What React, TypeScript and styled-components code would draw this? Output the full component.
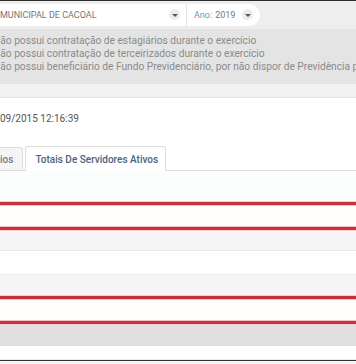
import React from 'react';
import styled, { createGlobalStyle, css } from 'styled-components';

const GlobalStyle = createGlobalStyle`
  html, body {
    margin: 0;
    padding: 0;
    background: #fff;
    overflow: hidden;
  }

  body {
    font-family: Roboto, "Liberation Sans", Arial, sans-serif;
  }
`;

const Page = styled.div`
  width: 356px;
  height: 364px;
  overflow: hidden;
  display: flex;
  flex-direction: column;
`;

const TopStrip = styled.div`
  height: 1px;
  background: #2b2b2b;
`;

const Toolbar = styled.div`
  height: 28px;
  box-sizing: border-box;
  padding: 3px 0 3px 0;
  background: #eeeeee;
  display: flex;
  align-items: center;
`;

const Pill = styled.div`
  height: 22px;
  width: 260px;
  background: #fff;
  border-radius: 0 11px 11px 0;
  display: flex;
  align-items: center;
`;

const Select = styled.div<{ $grow?: boolean }>`
  height: 100%;
  display: flex;
  align-items: center;
  font-size: 9px;
  color: #777;
  white-space: nowrap;
  ${(p) =>
    p.$grow
      ? css`
          width: 187px;
          padding-right: 6px;
          border-right: 1px solid #e3e3e3;
        `
      : css`
          flex: 1;
          padding: 0 7px 0 7px;
        `}
  box-sizing: border-box;
`;

const SelectText = styled.span`
  flex: 1;
  text-transform: uppercase;
`;

const Label = styled.span`
  color: #6d96bd;
  margin-right: 3px;
`;

const Caret = styled.span`
  width: 11px;
  height: 11px;
  border-radius: 50%;
  background: #ececec;
  display: flex;
  align-items: center;
  justify-content: center;
  margin-left: auto;

  &::after {
    content: '';
    border-left: 3px solid transparent;
    border-right: 3px solid transparent;
    border-top: 3px solid #555;
    margin-top: 1px;
  }
`;

const Notices = styled.div`
  height: 56px;
  box-sizing: border-box;
  padding-top: 5px;
  background: #e4e4e4;
  overflow: hidden;
`;

const NoticeLine = styled.div`
  margin-left: -7px;
  font-size: 10.2px;
  line-height: 13px;
  color: #8b8b8b;
  white-space: nowrap;
`;

const SubBar = styled.div`
  height: 13px;
  background: #f2f2f2;
  border-bottom: 1px solid #e6e6e6;
`;

const DateLine = styled.div`
  margin-top: 14px;
  font-size: 10px;
  line-height: 14px;
  color: #555;
  white-space: nowrap;
`;

const TabBar = styled.div`
  margin-top: 20px;
  height: 25px;
  box-sizing: border-box;
  display: flex;
  align-items: flex-end;
  border-bottom: 1px solid #dddddd;
`;

const Tab = styled.div<{ $active?: boolean }>`
  box-sizing: border-box;
  display: flex;
  align-items: center;
  font-size: 10px;
  font-weight: 500;
  white-space: nowrap;
  border: 1px solid #dddddd;
  border-bottom: none;
  border-radius: 3px 3px 0 0;
  ${(p) =>
    p.$active
      ? css`
          height: 25px;
          margin: 0 0 -1px 2px;
          padding: 0 7px 0 9px;
          background: #fff;
          color: #4a6480;
        `
      : css`
          height: 23px;
          padding: 0 9px 0 0;
          border-left: none;
          border-radius: 0 3px 0 0;
          background: #f5f5f5;
          color: #7a7a7a;
        `}
`;

const Table = styled.div`
  display: flex;
  flex-direction: column;
`;

type Tone = 'white' | 'stripe' | 'hover' | 'marked';

const Row = styled.div<{ $tone: Tone; $h: number }>`
  height: ${(p) => p.$h}px;
  box-sizing: border-box;
  flex-shrink: 0;
  ${(p) => {
    switch (p.$tone) {
      case 'marked':
        return css`
          background: #fffefc;
          border-top: 3px solid #c8303b;
          border-bottom: 3px solid #c8303b;
          box-shadow: inset 0 1px 0 #f3c0c4, inset 0 -1px 0 #f3c0c4,
            0 -1px 0 #f6cfd2, 0 1px 0 #f6cfd2;
          position: relative;
          z-index: 1;
        `;
      case 'stripe':
        return css`
          background: #f5f5f5;
          border-bottom: 1px solid #e8e8e8;
        `;
      case 'hover':
        return css`
          background: #e1dfdf;
        `;
      default:
        return css`
          background: #fff;
          border-bottom: 1px solid #ececec;
        `;
    }
  }}
`;

const TableHead = styled.div`
  height: 31px;
  flex-shrink: 0;
  background: #fcfdfd;
`;

const Footer = styled.div`
  flex-shrink: 0;
  height: 3px;
  border-top: 1px solid #333;
  background: #f4f4f4;
`;

const notices = [
  'Não possui contratação de estagiários durante o exercício',
  'Não possui contratação de terceirizados durante o exercício',
  'Não possui beneficiário de Fundo Previdenciário, por não dispor de Previdência própria',
];

const rows: { tone: Tone; h: number }[] = [
  { tone: 'marked', h: 28 },
  { tone: 'stripe', h: 21 },
  { tone: 'white', h: 24 },
  { tone: 'stripe', h: 21 },
  { tone: 'marked', h: 28 },
  { tone: 'hover', h: 22 },
  { tone: 'white', h: 14 },
];

export default function App() {
  return (
    <Page>
      <GlobalStyle />
      <TopStrip />
      <Toolbar>
        <Pill>
          <Select $grow>
            <SelectText>Municipal de Cacoal</SelectText>
            <Caret />
          </Select>
          <Select>
            <Label>Ano:</Label>
            2019
            <Caret />
          </Select>
        </Pill>
      </Toolbar>
      <Notices>
        {notices.map((n) => (
          <NoticeLine key={n}>{n}</NoticeLine>
        ))}
      </Notices>
      <SubBar />
      <DateLine>09/2015 12:16:39</DateLine>
      <TabBar>
        <Tab>ios</Tab>
        <Tab $active>Totais De Servidores Ativos</Tab>
      </TabBar>
      <Table>
        <TableHead />
        {rows.map((r, i) => (
          <Row key={i} $tone={r.tone} $h={r.h} />
        ))}
      </Table>
      <Footer />
    </Page>
  );
}
